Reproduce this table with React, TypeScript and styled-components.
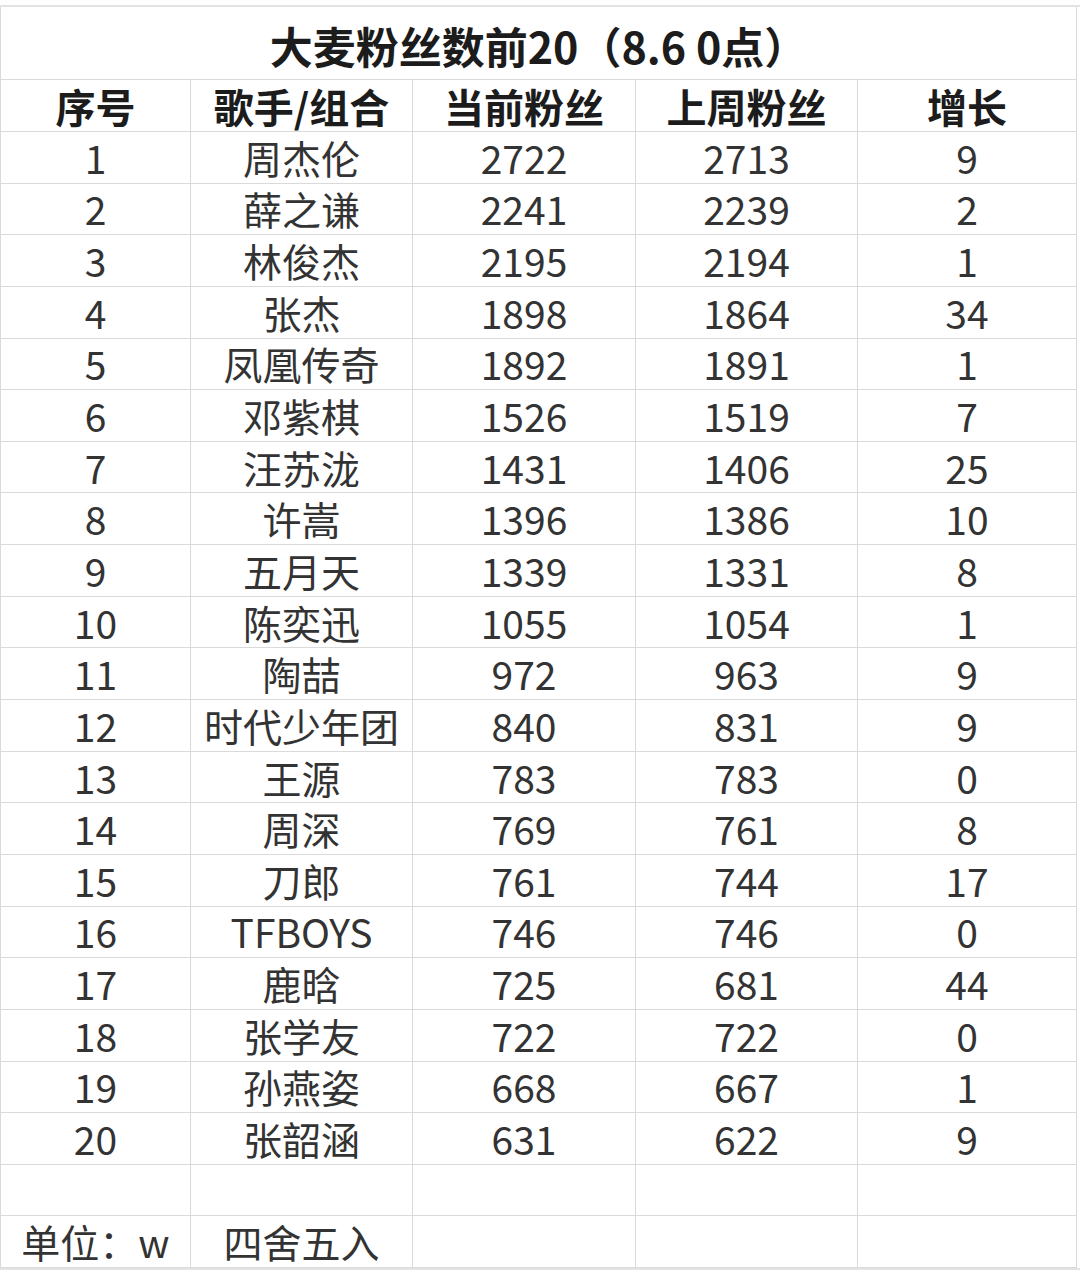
import styled, { createGlobalStyle } from "styled-components";

const GlobalStyle = createGlobalStyle`
  html, body {
    margin: 0;
    padding: 0;
    background: #ffffff;
  }
  body {
    font-family: "Noto Sans CJK SC", "Noto Sans", sans-serif;
    color: #333333;
  }
`;

const Page = styled.div`
  width: 1080px;
  height: 1275px;
  padding-top: 5px;
  box-sizing: border-box;
  background: #ffffff;
`;

const Sheet = styled.div`
  width: 1080px;
  border-top: 2px solid #e3e3e3;
  border-bottom: 2px solid #e3e3e3;
  box-sizing: border-box;
`;

const Grid = styled.div`
  display: grid;
  width: 1076px;
  grid-template-columns: 190px 222px 223px 222px 219px;
  grid-template-rows: 73px 52px repeat(22, 51.65px);
  border-left: 1px solid #dadada;
  box-sizing: border-box;
`;

const Cell = styled.div<{ $span?: number; $bold?: boolean; $size?: number }>`
  grid-column: span ${({ $span }) => $span ?? 1};
  display: flex;
  align-items: center;
  justify-content: center;
  border-right: 1px solid #dadada;
  border-bottom: 1px solid #dadada;
  font-size: ${({ $size }) => $size ?? 39}px;
  font-weight: ${({ $bold }) => ($bold ? 700 : 400)};
  color: ${({ $bold }) => ($bold ? "#1c1c1c" : "#333333")};
  line-height: 1;
  white-space: nowrap;
  box-sizing: border-box;
`;

const Title = styled(Cell)`
  padding-top: 4px;
`;

const headers = ["序号", "歌手/组合", "当前粉丝", "上周粉丝", "增长"];

const rows: [number, string, number, number, number][] = [
  [1, "周杰伦", 2722, 2713, 9],
  [2, "薛之谦", 2241, 2239, 2],
  [3, "林俊杰", 2195, 2194, 1],
  [4, "张杰", 1898, 1864, 34],
  [5, "凤凰传奇", 1892, 1891, 1],
  [6, "邓紫棋", 1526, 1519, 7],
  [7, "汪苏泷", 1431, 1406, 25],
  [8, "许嵩", 1396, 1386, 10],
  [9, "五月天", 1339, 1331, 8],
  [10, "陈奕迅", 1055, 1054, 1],
  [11, "陶喆", 972, 963, 9],
  [12, "时代少年团", 840, 831, 9],
  [13, "王源", 783, 783, 0],
  [14, "周深", 769, 761, 8],
  [15, "刀郎", 761, 744, 17],
  [16, "TFBOYS", 746, 746, 0],
  [17, "鹿晗", 725, 681, 44],
  [18, "张学友", 722, 722, 0],
  [19, "孙燕姿", 668, 667, 1],
  [20, "张韶涵", 631, 622, 9],
];

export default function App() {
  return (
    <>
      <GlobalStyle />
      <Page>
        <Sheet>
          <Grid>
            <Title $span={5} $bold $size={43}>
              大麦粉丝数前20（8.6 0点）
            </Title>
            {headers.map((h) => (
              <Cell key={h} $bold $size={40}>
                {h}
              </Cell>
            ))}
            {rows.map((r) =>
              r.map((v, i) => <Cell key={`${r[0]}-${i}`}>{v}</Cell>)
            )}
            {[0, 1, 2, 3, 4].map((i) => (
              <Cell key={`empty-${i}`} />
            ))}
            <Cell>单位：w</Cell>
            <Cell>四舍五入</Cell>
            <Cell />
            <Cell />
            <Cell />
          </Grid>
        </Sheet>
      </Page>
    </>
  );
}
